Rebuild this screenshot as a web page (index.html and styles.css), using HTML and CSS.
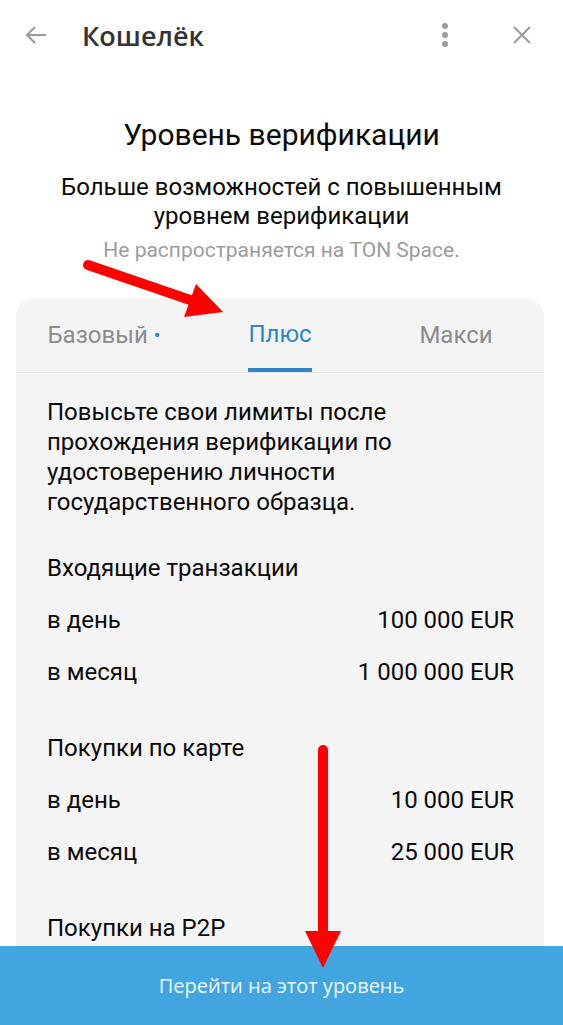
FILE: index.html
```html
<!DOCTYPE html>
<html lang="ru">
<head>
    <meta charset="UTF-8">
    <meta name="viewport" content="width=device-width, initial-scale=1.0">
    <title>Кошелёк</title>
    <link rel="stylesheet" href="styles.css">
</head>
<body>
    <header class="topbar">
        <svg class="icon back" width="24" height="24" viewBox="0 0 24 24">
            <path d="M22 12H3M11 4l-8 8 8 8" fill="none" stroke="#9a9a9a" stroke-width="2" />
        </svg>
        <span class="app-title">Кошелёк</span>
        <span class="spacer"></span>
        <svg class="icon dots" width="8" height="24" viewBox="0 0 8 24">
            <circle cx="4" cy="3" r="3" fill="#9a9a9a" />
            <circle cx="4" cy="12" r="3" fill="#9a9a9a" />
            <circle cx="4" cy="21" r="3" fill="#9a9a9a" />
        </svg>
        <svg class="icon close" width="18" height="18" viewBox="0 0 18 18">
            <path d="M1 1l16 16M17 1L1 17" fill="none" stroke="#9a9a9a" stroke-width="2" />
        </svg>
    </header>

    <main class="content">
        <h1>Уровень верификации</h1>
        <p class="subtitle">Больше возможностей с повышенным уровнем верификации</p>
        <p class="note">Не распространяется на TON Space.</p>

        <div class="card">
            <div class="tabs">
                <div class="tab">Базовый <span class="dot">•</span></div>
                <div class="tab active"><span class="tab-label">Плюс</span></div>
                <div class="tab">Макси</div>
            </div>

            <div class="card-body">
                <p class="lead">Повысьте свои лимиты после прохождения верификации по удостоверению личности государственного образца.</p>

                <div class="section">
                    <div class="section-title">Входящие транзакции</div>
                    <div class="row"><span>в день</span><span>100 000 EUR</span></div>
                    <div class="row"><span>в месяц</span><span>1 000 000 EUR</span></div>
                </div>

                <div class="section">
                    <div class="section-title">Покупки по карте</div>
                    <div class="row"><span>в день</span><span>10 000 EUR</span></div>
                    <div class="row"><span>в месяц</span><span>25 000 EUR</span></div>
                </div>

                <div class="section">
                    <div class="section-title">Покупки на P2P</div>
                    <div class="row"><span>в день</span><span>5 000 EUR</span></div>
                </div>
            </div>
        </div>
    </main>

    <button class="main-btn">Перейти на этот уровень</button>

    <!-- red annotation arrows drawn over the screenshot -->
    <svg class="annotations" width="563" height="1025" viewBox="0 0 563 1025">
        <line x1="88" y1="265" x2="196" y2="302" stroke="#f00" stroke-width="10" stroke-linecap="round" />
        <polygon points="223,312 184,317 196,284" fill="#f00" />
        <line x1="323" y1="750" x2="323" y2="935" stroke="#f00" stroke-width="10" stroke-linecap="round" />
        <polygon points="305,931 341,931 323,968" fill="#f00" />
    </svg>
</body>
</html>
```

FILE: styles.css
```css
/* Reset */
* {
    margin: 0;
    padding: 0;
    box-sizing: border-box;
}

body {
    background: #fff;
    font-family: 'Roboto', 'Liberation Sans', sans-serif;
    color: #0a0a0a;
    width: 563px;
    height: 1025px;
    overflow: hidden;
    position: relative;
}

/* Top bar */
.topbar {
    height: 70px;
    display: flex;
    align-items: center;
    padding: 0 32px 0 24px;
}

.back {
    margin-right: 34px;
}

.app-title {
    font-family: 'Open Sans', sans-serif;
    font-weight: 600;
    font-size: 27px;
    color: #333;
}

.spacer {
    flex: 1;
}

.dots {
    margin-right: 64px;
}

/* Heading */
.content {
    text-align: center;
}

h1 {
    font-weight: 400;
    font-size: 30px;
    line-height: 34px;
    margin-top: 48px;
}

.subtitle {
    font-size: 24px;
    line-height: 29px;
    margin: 21px auto 0;
    width: 470px;
}

.note {
    font-size: 21px;
    line-height: 24px;
    color: #9c9c9c;
    margin-top: 7px;
}

/* Card */
.card {
    margin: 36px 19px 0 16px;
    background: #f4f4f4;
    border-radius: 18px 18px 0 0;
    text-align: left;
}

.tabs {
    display: flex;
    height: 75px;
    border-bottom: 1px solid #e3e3e3;
}

.tab {
    flex: 1;
    display: flex;
    justify-content: center;
    align-items: center;
    font-size: 24px;
    color: #8c8c8c;
}

.tab .dot {
    color: #2b86c5;
    font-size: 20px;
    margin-left: 6px;
}

.tab.active {
    color: #2b86c5;
    align-items: stretch;
}

.tab-label {
    display: flex;
    align-items: center;
    padding-top: 1px;
    border-bottom: 4px solid #2b86c5;
    border-radius: 2px 2px 0 0;
}

.card-body {
    padding: 24px 30px 0 31px;
}

.lead {
    font-size: 24px;
    line-height: 30px;
}

.section {
    margin-top: 24px;
}

.section:first-of-type {
    margin-top: 25px;
}

.section-title,
.row {
    font-size: 24px;
    line-height: 52px;
    height: 52px;
}

.row {
    display: flex;
    justify-content: space-between;
}

/* Bottom button */
.main-btn {
    position: absolute;
    left: 0;
    bottom: 0;
    width: 100%;
    height: 79px;
    border: none;
    background: #42a5e0;
    color: #eef7fd;
    font-family: 'Open Sans', sans-serif;
    font-size: 20px;
}

.annotations {
    position: absolute;
    top: 0;
    left: 0;
    pointer-events: none;
}
```
